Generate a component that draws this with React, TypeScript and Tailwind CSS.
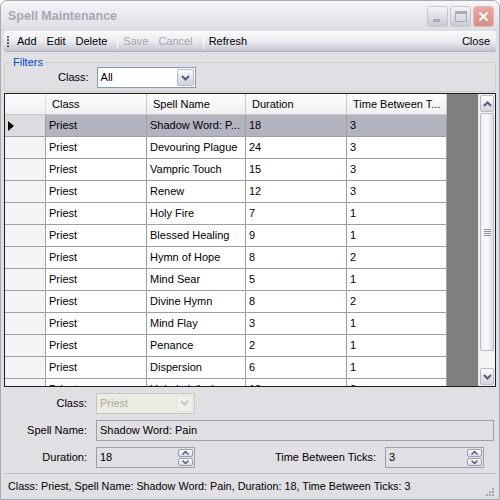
import React from "react"

const rows = [
  ["Priest", "Shadow Word: P...", "18", "3"],
  ["Priest", "Devouring Plague", "24", "3"],
  ["Priest", "Vampric Touch", "15", "3"],
  ["Priest", "Renew", "12", "3"],
  ["Priest", "Holy Fire", "7", "1"],
  ["Priest", "Blessed Healing", "9", "1"],
  ["Priest", "Hymn of Hope", "8", "2"],
  ["Priest", "Mind Sear", "5", "1"],
  ["Priest", "Divine Hymn", "8", "2"],
  ["Priest", "Mind Flay", "3", "1"],
  ["Priest", "Penance", "2", "1"],
  ["Priest", "Dispersion", "6", "1"],
  ["Priest", "Unholy Infusion", "10", "2"],
]

function Chevron({ up = false, color = "#4d6185" }: { up?: boolean; color?: string }) {
  return (
    <svg width="9" height="6" viewBox="0 0 9 6">
      <path d={up ? "M1 5 L4.5 1.5 L8 5" : "M1 1 L4.5 4.5 L8 1"} stroke={color} strokeWidth="2" fill="none" />
    </svg>
  )
}

function DropButton({ disabled = false }: { disabled?: boolean }) {
  return (
    <div
      className={
        "w-[17px] h-full flex items-center justify-center rounded-[2px] border " +
        (disabled
          ? "border-[#e3e3db] bg-[#f0f0ea]"
          : "border-[#b9bac6] bg-gradient-to-b from-[#fbfbfd] to-[#cfd0dc]")
      }
    >
      <Chevron color={disabled ? "#c9c9c0" : "#4d6185"} />
    </div>
  )
}

function Spinner() {
  return (
    <div className="w-[16px] h-full flex flex-col gap-[1px] py-[1px] pr-[1px]">
      <div className="flex-1 flex items-center justify-center border border-[#9c9eab] rounded-[2px] bg-gradient-to-b from-[#fdfdfe] to-[#d7d8e2]">
        <svg width="7" height="4" viewBox="0 0 7 4"><path d="M0.5 3.5 L3.5 0.5 L6.5 3.5" stroke="#4d6185" strokeWidth="1.5" fill="none" /></svg>
      </div>
      <div className="flex-1 flex items-center justify-center border border-[#9c9eab] rounded-[2px] bg-gradient-to-b from-[#fdfdfe] to-[#d7d8e2]">
        <svg width="7" height="4" viewBox="0 0 7 4"><path d="M0.5 0.5 L3.5 3.5 L6.5 0.5" stroke="#4d6185" strokeWidth="1.5" fill="none" /></svg>
      </div>
    </div>
  )
}

function TitleButton({ kind }: { kind: "min" | "max" | "close" }) {
  const close = kind === "close"
  return (
    <div
      className={
        "w-[21px] h-[21px] rounded-[3px] border flex items-center justify-center " +
        (close
          ? "border-[#e6b8b8] bg-gradient-to-b from-[#e9a9a0] to-[#d98d86]"
          : "border-[#c4c5d0] bg-gradient-to-b from-[#f4f4f7] to-[#c9cad5]")
      }
    >
      {kind === "min" && <div className="w-[7px] h-[3px] bg-[#a9aab5] mt-[8px] mr-[2px]" />}
      {kind === "max" && <div className="w-[12px] h-[11px] border border-[#a9aab5] border-t-[3px]" />}
      {close && (
        <svg width="11" height="11" viewBox="0 0 11 11">
          <path d="M1.5 1.5 L9.5 9.5 M9.5 1.5 L1.5 9.5" stroke="#fff" strokeWidth="2" />
        </svg>
      )}
    </div>
  )
}

export default function App() {
  const font = { fontFamily: '"Liberation Sans", Arial, sans-serif' }
  const cols = ["w-[101px]", "w-[99px]", "w-[101px]", "w-[100px]"]
  return (
    <div style={font} className="w-[500px] h-[500px] overflow-hidden bg-[#e0dfe3] text-[11px] text-black flex flex-col border border-[#a7a8b6] rounded-t-[7px]">
      {/* title bar */}
      <div className="h-[30px] shrink-0 flex items-center pl-[7px] pr-[5px] bg-gradient-to-b from-[#f6f6f9] via-[#e9e9ee] to-[#dcdce3]">
        <span className="font-bold text-[12.5px] text-[#a6a7b4] mt-[1px]">Spell Maintenance</span>
        <div className="ml-auto flex gap-[2px]">
          <TitleButton kind="min" />
          <TitleButton kind="max" />
          <TitleButton kind="close" />
        </div>
      </div>

      <div className="flex-1 flex flex-col px-[3px]">
        {/* toolbar */}
        <div className="h-[21px] shrink-0 flex items-center rounded-[3px] bg-gradient-to-b from-[#fbfbfc] via-[#ebebf0] to-[#c5c6d2] border-b border-[#b2b3c0] pl-[3px] pr-[6px]">
          <div className="flex flex-col gap-[1px] mr-[3px]">
            {[0, 1, 2, 3].map(i => (
              <div key={i} className="w-[2px] h-[2px] bg-[#5f6170]" />
            ))}
          </div>
          <span className="px-[5px]">Add</span>
          <span className="px-[5px]">Edit</span>
          <span className="px-[5px]">Delete</span>
          <div className="w-[1px] h-[16px] bg-[#a0a1ae] border-r border-white ml-[5px]" />
          <span className="px-[5px] text-[#a5a5ab]">Save</span>
          <span className="px-[5px] text-[#a5a5ab]">Cancel</span>
          <div className="w-[1px] h-[16px] bg-[#a0a1ae] border-r border-white ml-[5px]" />
          <span className="px-[5px]">Refresh</span>
          <span className="ml-auto">Close</span>
        </div>

        {/* filters group */}
        <div className="relative mt-[10px] h-[30px] shrink-0 border border-[#d0d0c8] rounded-[3px] flex items-center">
          <span className="absolute -top-[8px] left-[6px] px-[2px] bg-[#e0dfe3] text-[#0046d5] leading-[14px]">Filters</span>
          <span className="ml-[53px] mt-[1px]">Class:</span>
          <div className="ml-[8px] w-[99px] h-[21px] mt-[1px] bg-white border border-[#7f9db9] flex items-center p-[1px]">
            <span className="flex-1 pl-[2px]">All</span>
            <DropButton />
          </div>
        </div>

        {/* grid */}
        <div className="mt-[1px] h-[294px] shrink-0 border border-[#1e1e1e] flex overflow-hidden">
          <div className="flex flex-col bg-white overflow-hidden">
            <div className="flex h-[21px] shrink-0 bg-gradient-to-b from-[#fdfdfd] to-[#f0f0f2] border-b border-[#c9c9cc]">
              <div className="w-[41px] border-r border-[#d9d9dc]" />
              {["Class", "Spell Name", "Duration", "Time Between T..."].map((h, i) => (
                <div key={h} className={cols[i] + " flex items-center pl-[6px] border-r border-[#c9c9cc] whitespace-nowrap"}>
                  {h}
                </div>
              ))}
            </div>
            {rows.map((r, ri) => (
              <div key={ri} className={"flex h-[22px] shrink-0 " + (ri === 0 ? "bg-[#b2b4bf]" : "bg-white")}>
                <div className={"w-[41px] border-r border-b border-[#a0a0a0] flex items-center pl-[3px] " + (ri === 0 ? "bg-[#dcdce0]" : "bg-[#f4f4f6]")}>
                  {ri === 0 && (
                    <svg width="6" height="10" viewBox="0 0 6 10"><path d="M0 0 L6 5 L0 10 Z" fill="#000" /></svg>
                  )}
                </div>
                {r.map((c, ci) => (
                  <div key={ci} className={cols[ci] + " flex items-center pl-[3px] border-r border-b border-[#a0a0a0] whitespace-nowrap overflow-hidden"}>
                    {c}
                  </div>
                ))}
              </div>
            ))}
          </div>
          <div className="flex-1 bg-[#808080]" />
          {/* scrollbar */}
          <div className="w-[17px] flex flex-col bg-[#f3f3f6] border-l border-[#e6e6ec]">
            <div className="h-[17px] shrink-0 m-[1px] rounded-[2px] border border-[#b9bac6] bg-gradient-to-b from-[#fdfdfe] to-[#d3d4de] flex items-center justify-center">
              <Chevron up />
            </div>
            <div className="h-[238px] shrink-0 mx-[1px] rounded-[2px] border border-[#b9bac6] bg-gradient-to-r from-[#f0f0f4] via-[#fafafc] to-[#dcdde6] flex items-center justify-center">
              <div className="flex flex-col gap-[1px]">
                {[0, 1, 2, 3].map(i => (
                  <div key={i} className="w-[7px] h-[1px] bg-[#8e8fa0]" />
                ))}
              </div>
            </div>
            <div className="flex-1" />
            <div className="h-[17px] shrink-0 m-[1px] rounded-[2px] border border-[#b9bac6] bg-gradient-to-b from-[#fdfdfe] to-[#d3d4de] flex items-center justify-center">
              <Chevron />
            </div>
          </div>
        </div>

        {/* details */}
        <div className="flex flex-col gap-[7px] pt-[6px] pr-[2px]">
          <div className="flex items-center h-[20px]">
            <span className="w-[83px] text-right">Class:</span>
            <div className="ml-[9px] w-[99px] h-[21px] border border-[#c9c7ba] bg-[#ebebe4] flex items-center p-[1px]">
              <span className="flex-1 pl-[2px] text-[#aca899]">Priest</span>
              <DropButton disabled />
            </div>
          </div>
          <div className="flex items-center h-[20px]">
            <span className="w-[83px] text-right">Spell Name:</span>
            <div className="ml-[9px] flex-1 h-[21px] border border-[#9d9ea9] flex items-center pl-[3px]">
              Shadow Word: Pain
            </div>
          </div>
          <div className="flex items-center h-[20px]">
            <span className="w-[83px] text-right">Duration:</span>
            <div className="ml-[9px] w-[99px] h-[21px] border border-[#9d9ea9] flex items-center">
              <span className="flex-1 pl-[3px]">18</span>
              <Spinner />
            </div>
            <span className="ml-auto mr-[9px]">Time Between Ticks:</span>
            <div className="w-[99px] h-[21px] border border-[#9d9ea9] flex items-center mr-[10px]">
              <span className="flex-1 pl-[3px]">3</span>
              <Spinner />
            </div>
          </div>
        </div>

        {/* status bar */}
        <div className="mt-auto mb-[1px] h-[25px] shrink-0 border-t border-[#b9b9c2] flex items-center pl-[4px] relative">
          <span className="text-[10.8px]">Class: Priest, Spell Name: Shadow Word: Pain, Duration: 18, Time Between Ticks: 3</span>
          <div className="absolute right-[2px] bottom-[2px] grid grid-cols-3 gap-[1px]">
            {[0, 0, 1, 0, 1, 1, 1, 1, 1].map((v, i) => (
              <div key={i} className={"w-[2px] h-[2px] " + (v ? "bg-[#a5a6b2]" : "")} />
            ))}
          </div>
        </div>
      </div>
    </div>
  )
}
